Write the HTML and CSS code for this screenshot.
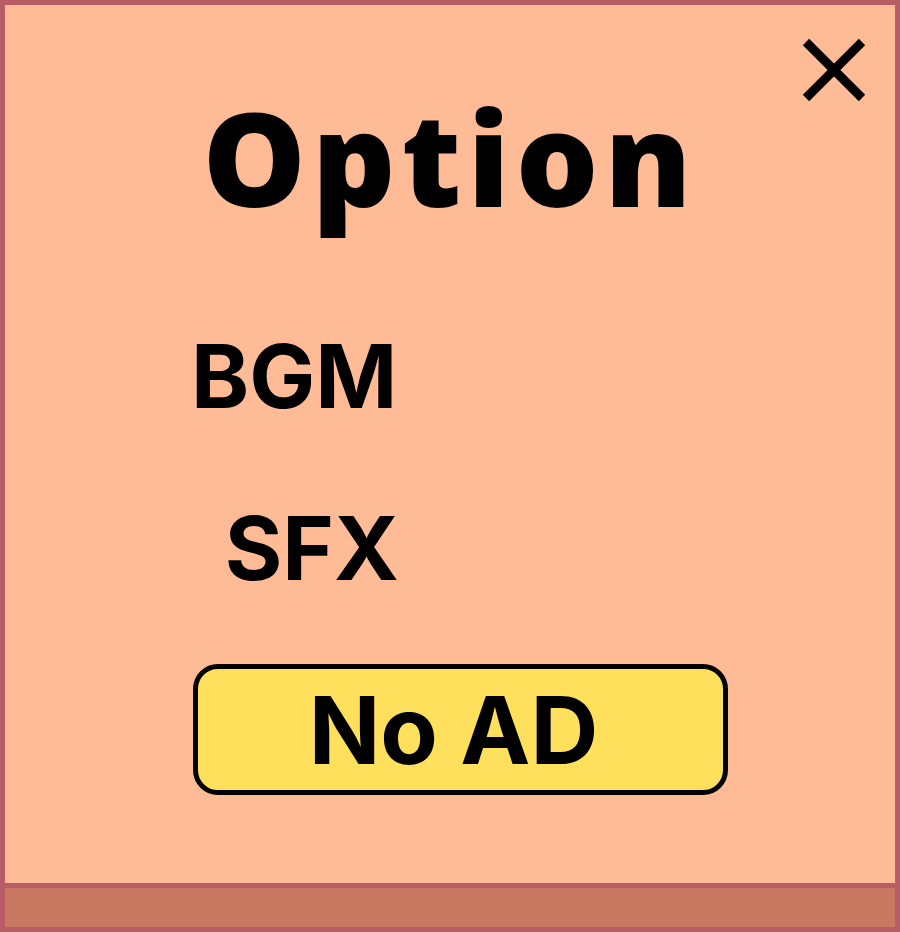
FILE: index.html
```html
<!DOCTYPE html>
<html>
<head>
<meta charset="utf-8">
<link rel="stylesheet" href="styles.css">
</head>
<body>
<div class="frame">
  <div class="panel">
    <button class="close" aria-label="Close">
      <svg width="64" height="64" viewBox="0 0 64 64"><path d="M4 4 L60 60 M60 4 L4 60" stroke="#000" stroke-width="9" fill="none"/></svg>
    </button>
    <h1 class="title">Option</h1>
    <div class="settings">
      <div class="row"><span class="label">BGM</span></div>
      <div class="row"><span class="label label-sfx">SFX</span></div>
    </div>
    <div class="actions">
      <button class="noad">No AD</button>
    </div>
  </div>
  <div class="footer"></div>
</div>
</body>
</html>
```
FILE: styles.css
```css
html, body {
  margin: 0;
  padding: 0;
}
body {
  width: 900px;
  height: 932px;
  overflow: hidden;
  font-family: Inter, "Liberation Sans", sans-serif;
}
.frame {
  box-sizing: border-box;
  width: 900px;
  height: 932px;
  border: 5px solid #b85c66;
  display: flex;
  flex-direction: column;
}
.panel {
  flex: 1;
  background: #ffbb96;
  position: relative;
  display: flex;
  flex-direction: column;
}
.footer {
  height: 39px;
  border-top: 5px solid #b85c66;
  background: #c97862;
}
.close {
  position: absolute;
  top: 33px;
  right: 29px;
  width: 64px;
  height: 64px;
  padding: 0;
  border: 0;
  background: none;
}
.close svg { display: block; }
.title {
  margin: 82px 0 0 0;
  text-align: center;
  font-family: "Open Sans", sans-serif;
  font-weight: 800;
  font-size: 130px;
  line-height: 140px;
  letter-spacing: 6px;
  color: #000;
}
.settings {
  margin-top: 94px;
  display: flex;
  flex-direction: column;
  gap: 62px;
  padding-left: 186px;
}
.row {
  display: flex;
}
.label {
  width: 206px;
  text-align: right;
  font-weight: 700;
  font-size: 88px;
  line-height: 110px;
  color: #000;
}
.label-sfx {
  width: 208px;
}
.actions {
  margin-top: 61px;
  padding-left: 188px;
}
.noad {
  box-sizing: border-box;
  width: 535px;
  height: 131px;
  background: #ffe05c;
  border: 5px solid #000;
  border-radius: 25px;
  font-family: Inter, sans-serif;
  font-weight: 700;
  font-size: 94px;
  color: #000;
  padding: 0;
  text-indent: -14px;
}
```
